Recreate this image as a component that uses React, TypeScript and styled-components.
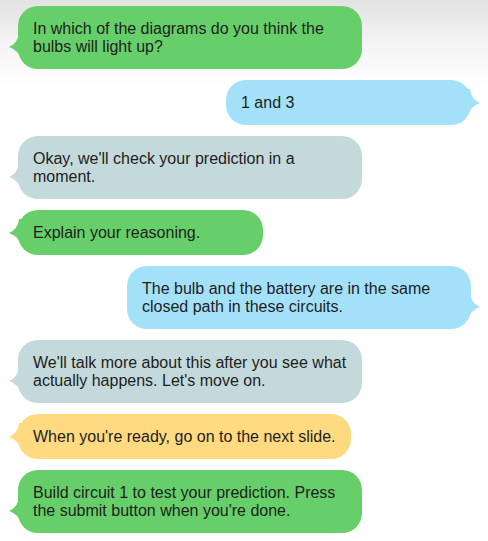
import React from "react";
import styled, { createGlobalStyle } from "styled-components";

const Global = createGlobalStyle`
  html, body { margin: 0; padding: 0; background: #fff; }
  body { font-family: "Liberation Sans", Arial, sans-serif; }
`;

type Side = "left" | "right";
type Tone = "green" | "blue" | "gray" | "yellow";

const colors: Record<Tone, string> = {
  green: "#67cf6a",
  blue: "#a3e1f8",
  gray: "#c4d9db",
  yellow: "#ffda80",
};

const Page = styled.div`
  width: 488px;
  height: 541px;
  box-sizing: border-box;
  padding: 6px 17px 0 18px;
  background: linear-gradient(#e2e2e2 0px, #f3f3f3 40px, #ffffff 85px);
  display: flex;
  flex-direction: column;
  gap: 11px;
  overflow: hidden;
`;

const Row = styled.div<{ $side: Side }>`
  display: flex;
  justify-content: ${(p) => (p.$side === "left" ? "flex-start" : "flex-end")};
`;

const Bubble = styled.div<{ $tone: Tone }>`
  position: relative;
  box-sizing: border-box;
  min-width: 245px;
  max-width: 344px;
  padding: 14px 15px 13px 15px;
  border-radius: 20px;
  background: ${(p) => colors[p.$tone]};
  color: #1e1e1e;
  font-size: 16px;
  line-height: 18px;
`;

const Tail = styled.svg<{ $side: Side }>`
  position: absolute;
  bottom: 8px;
  width: 14px;
  height: 28px;
  ${(p) => (p.$side === "left" ? "left: -9px;" : "right: -9px; transform: scaleX(-1);")}
`;

const msgs: { side: Side; tone: Tone; text: string }[] = [
  { side: "left", tone: "green", text: "In which of the diagrams do you think the bulbs will light up?" },
  { side: "right", tone: "blue", text: "1 and 3" },
  { side: "left", tone: "gray", text: "Okay, we'll check your prediction in a moment." },
  { side: "left", tone: "green", text: "Explain your reasoning." },
  { side: "right", tone: "blue", text: "The bulb and the battery are in the same closed path in these circuits." },
  { side: "left", tone: "gray", text: "We'll talk more about this after you see what actually happens. Let's move on." },
  { side: "left", tone: "yellow", text: "When you're ready, go on to the next slide." },
  { side: "left", tone: "green", text: "Build circuit 1 to test your prediction. Press the submit button when you're done." },
];

export default function App() {
  return (
    <>
      <Global />
      <Page>
        {msgs.map((m, i) => (
          <Row key={i} $side={m.side}>
            <Bubble $tone={m.tone}>
              <Tail $side={m.side} viewBox="0 0 14 28">
                <path d="M10 0 Q9 10 0 14 Q8 16 14 28 L14 0 Z" fill={colors[m.tone]} />
              </Tail>
              {m.text}
            </Bubble>
          </Row>
        ))}
      </Page>
    </>
  );
}
